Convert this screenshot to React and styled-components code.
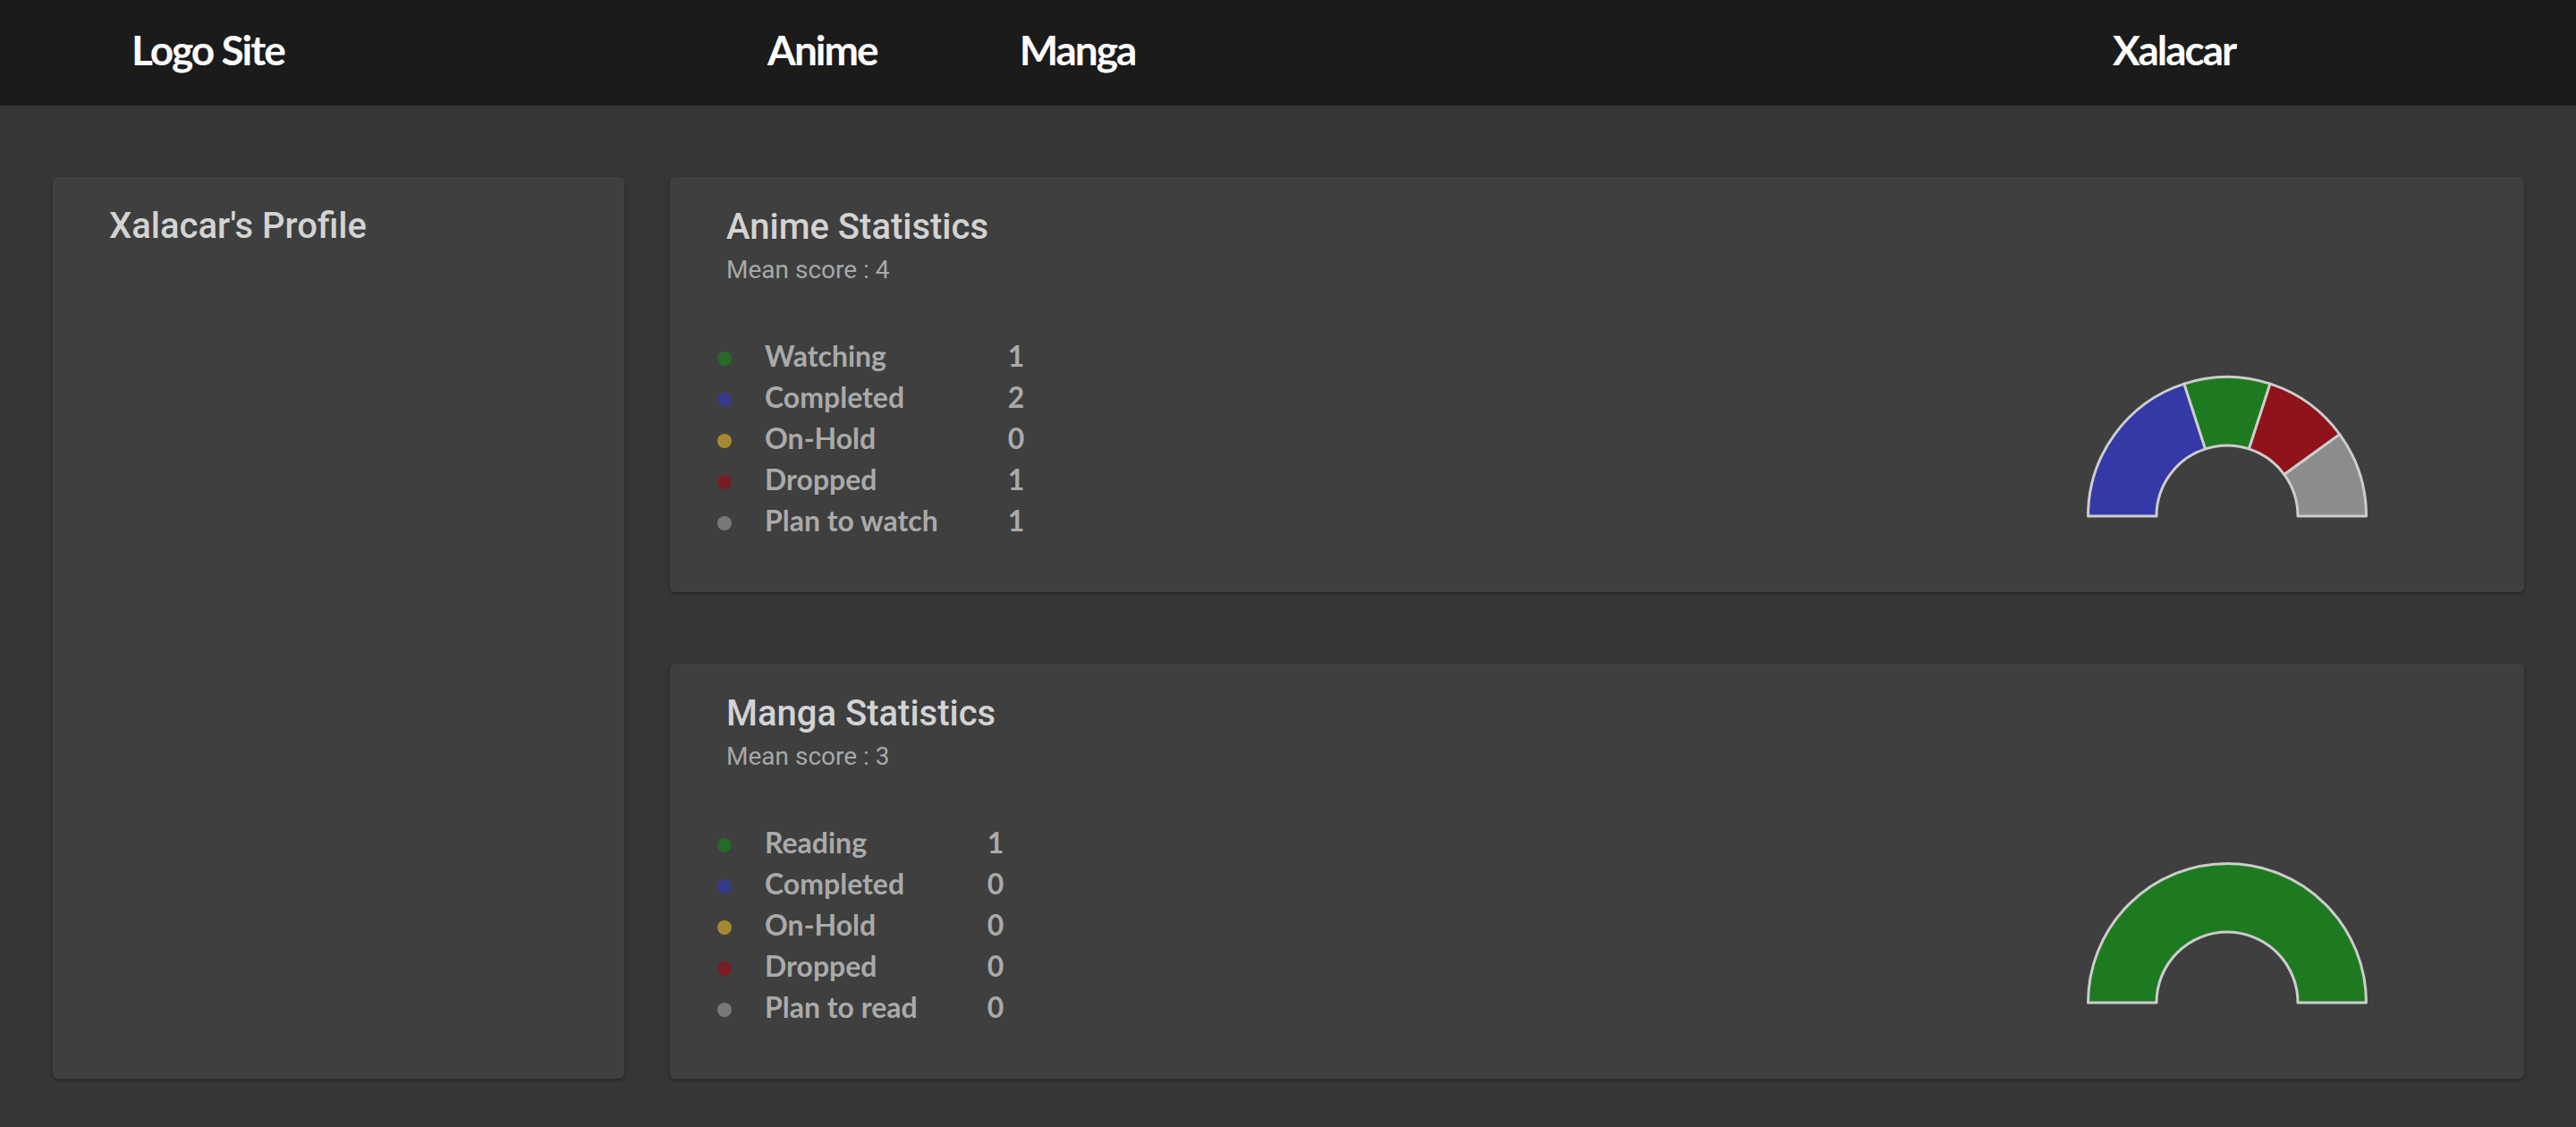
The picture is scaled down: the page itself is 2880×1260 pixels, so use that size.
import React from "react";
import styled, { createGlobalStyle } from "styled-components";

const GlobalStyle = createGlobalStyle`
  html, body {
    margin: 0;
    padding: 0;
    background: #363636;
  }
  body {
    font-family: Roboto, "Liberation Sans", sans-serif;
  }
`;

const Page = styled.div`
  min-height: 1260px;
  background: #363636;
  display: flex;
  flex-direction: column;
`;

const Header = styled.header`
  height: 118px;
  box-sizing: border-box;
  background: #1b1b1b;
  display: grid;
  grid-template-columns: 711px 1504px auto;
  align-items: center;
  padding: 0 0 7px 147px;
`;

const HeaderText = styled.a`
  font-family: Lato, "Open Sans", sans-serif;
  font-weight: 700;
  font-size: 46px;
  line-height: 1.2;
  color: #ffffff;
  text-decoration: none;
  letter-spacing: -2px;
  white-space: nowrap;
`;

const Nav = styled.nav`
  display: flex;
  gap: 159px;
`;

const Main = styled.main`
  display: grid;
  grid-template-columns: 639px 1fr;
  column-gap: 51px;
  padding: 80px 58px 54px 59px;
`;

const Card = styled.section`
  background: #3f3f3f;
  border-radius: 6px;
  box-shadow: 0 2px 4px rgba(0, 0, 0, 0.3);
  box-sizing: border-box;
`;

const ProfileCard = styled(Card)`
  padding: 32px 63px;
`;

const StatsColumn = styled.div`
  display: flex;
  flex-direction: column;
  gap: 80px;
`;

const StatCard = styled(Card)`
  height: 464px;
  display: grid;
  grid-template-columns: 1fr 664px;
`;

const StatInfo = styled.div`
  padding: 33px 0 0 53px;
`;

const HeadBlock = styled.div`
  padding-left: 10px;
`;

const Title = styled.h2`
  margin: 0;
  font-family: Roboto, "Liberation Sans", sans-serif;
  font-weight: 500;
  font-size: 40px;
  line-height: 46px;
  color: #d3d3d3;
`;

const Mean = styled.p`
  margin: 8px 0 0;
  font-family: Roboto, "Liberation Sans", sans-serif;
  font-weight: 400;
  font-size: 28px;
  line-height: 1.2;
  color: #a8a8a8;
`;

const Legend = styled.div`
  margin-top: 56px;
  display: grid;
  grid-template-columns: 16px auto auto;
  grid-auto-rows: 46px;
  justify-content: start;
  align-items: center;
`;

const Dot = styled.span`
  width: 16px;
  height: 16px;
  border-radius: 50%;
  background: ${(p) => p.$color};
  opacity: 0.75;
  margin-top: 6px;
`;

const LegendText = styled.span`
  font-family: Lato, "Open Sans", sans-serif;
  font-weight: 700;
  font-size: 32px;
  line-height: 46px;
  color: #aaaaaa;
  white-space: nowrap;
`;

const Label = styled(LegendText)`
  margin-left: 37px;
  padding-right: 78px;
`;

const ChartCell = styled.div`
  display: flex;
  align-items: flex-end;
  justify-content: center;
  padding-bottom: 82px;
`;

const COLORS = {
  green: "#1e7a20",
  blue: "#3538a5",
  gold: "#c9a22f",
  red: "#8e131a",
  grey: "#8c8c8c",
};

function arcPath(cx, cy, ro, ri, a0, a1) {
  const rad = (a) => (a * Math.PI) / 180;
  const p = (r, a) => [cx + r * Math.cos(rad(a)), cy - r * Math.sin(rad(a))];
  const [x0, y0] = p(ro, a0);
  const [x1, y1] = p(ro, a1);
  const [x2, y2] = p(ri, a1);
  const [x3, y3] = p(ri, a0);
  return `M${x0} ${y0} A${ro} ${ro} 0 0 1 ${x1} ${y1} L${x2} ${y2} A${ri} ${ri} 0 0 0 ${x3} ${y3} Z`;
}

function HalfDonut({ slices }) {
  const total = slices.reduce((s, x) => s + x.value, 0) || 1;
  const cx = 160;
  const cy = 160;
  let angle = 180;
  const paths = [];
  slices.forEach((s, i) => {
    if (!s.value) return;
    const span = (s.value / total) * 180;
    const a0 = angle;
    const a1 = angle - span;
    angle = a1;
    paths.push(
      <path
        key={i}
        d={arcPath(cx, cy, 155.5, 79, a0, a1)}
        fill={s.color}
        stroke="#cdcdcd"
        strokeWidth="3"
        strokeLinejoin="round"
      />
    );
  });
  return (
    <svg width="320" height="163" viewBox="0 0 320 163">
      {paths}
    </svg>
  );
}

function StatsPanel({ title, mean, rows, chartOrder }) {
  const byKey = Object.fromEntries(rows.map((r) => [r.key, r]));
  const slices = chartOrder.map((k) => ({ value: byKey[k].value, color: byKey[k].color }));
  return (
    <StatCard>
      <StatInfo>
        <HeadBlock>
          <Title>{title}</Title>
          <Mean>Mean score : {mean}</Mean>
        </HeadBlock>
        <Legend>
          {rows.map((r) => (
            <React.Fragment key={r.key}>
              <Dot $color={r.color} />
              <Label>{r.label}</Label>
              <LegendText>{r.value}</LegendText>
            </React.Fragment>
          ))}
        </Legend>
      </StatInfo>
      <ChartCell>
        <HalfDonut slices={slices} />
      </ChartCell>
    </StatCard>
  );
}

const animeRows = [
  { key: "current", label: "Watching", value: 1, color: COLORS.green },
  { key: "completed", label: "Completed", value: 2, color: COLORS.blue },
  { key: "hold", label: "On-Hold", value: 0, color: COLORS.gold },
  { key: "dropped", label: "Dropped", value: 1, color: COLORS.red },
  { key: "plan", label: "Plan to watch", value: 1, color: COLORS.grey },
];

const mangaRows = [
  { key: "current", label: "Reading", value: 1, color: COLORS.green },
  { key: "completed", label: "Completed", value: 0, color: COLORS.blue },
  { key: "hold", label: "On-Hold", value: 0, color: COLORS.gold },
  { key: "dropped", label: "Dropped", value: 0, color: COLORS.red },
  { key: "plan", label: "Plan to read", value: 0, color: COLORS.grey },
];

const ORDER = ["completed", "current", "hold", "dropped", "plan"];

export default function App() {
  return (
    <Page>
      <GlobalStyle />
      <Header>
        <HeaderText href="#">Logo Site</HeaderText>
        <Nav>
          <HeaderText href="#">Anime</HeaderText>
          <HeaderText href="#">Manga</HeaderText>
        </Nav>
        <HeaderText href="#">Xalacar</HeaderText>
      </Header>
      <Main>
        <ProfileCard>
          <Title>Xalacar's Profile</Title>
        </ProfileCard>
        <StatsColumn>
          <StatsPanel title="Anime Statistics" mean={4} rows={animeRows} chartOrder={ORDER} />
          <StatsPanel title="Manga Statistics" mean={3} rows={mangaRows} chartOrder={ORDER} />
        </StatsColumn>
      </Main>
    </Page>
  );
}
